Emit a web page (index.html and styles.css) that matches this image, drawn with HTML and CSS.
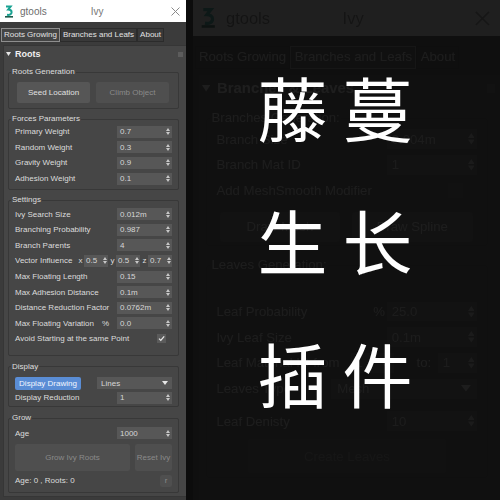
FILE: index.html
```html
<!DOCTYPE html>
<html>
<head>
<meta charset="utf-8">
<title>gtools Ivy</title>
<link rel="stylesheet" href="styles.css">
</head>
<body>
<div class="screen">
  <div class="panel">
    <div class="titlebar">
      <svg class="logo" viewBox="0 0 10 13" width="10" height="13"><path d="M2 1.6h4.6L4.2 4.6c2 0 3.4 1 3.4 2.7 0 2-1.9 3-4.6 2.5" fill="none" stroke="#1aa393" stroke-width="2"/><rect x="1" y="11" width="8" height="1.6" fill="#1d5d4d"/></svg>
      <span class="app">gtools</span>
      <span class="title">Ivy</span>
      <svg class="close" viewBox="0 0 9 9" width="9" height="9"><path d="M0.5 0.5L8.5 8.5M8.5 0.5L0.5 8.5" stroke="#8a8a8a" stroke-width="1"/></svg>
    </div>
    <div class="tabs">
      <span class="tab active">Roots Growing</span>
      <span class="tab">Branches and Leafs</span>
      <span class="tab">About</span>
    </div>
    <div class="rollout">
      <div class="rollout-head">
        <svg class="caret" viewBox="0 0 5 4" width="5" height="4"><path d="M0 0h5L2.5 4z" fill="#e6e6e6"/></svg>
        <b>Roots</b>
        <span class="grip"></span>
      </div>

      <fieldset class="group g-gen">
        <legend>Roots Generation</legend>
        <div class="btn-row">
          <div class="btn">Seed Location</div>
          <div class="btn disabled">Climb Object</div>
        </div>
      </fieldset>

      <fieldset class="group g-forces">
        <legend>Forces Parameters</legend>
        <div class="row"><span>Primary Weight</span><span class="field"><span class="v">0.7</span><svg class="spin" viewBox="0 0 4 7"><path d="M0 3L2 0L4 3zM0 4L2 7L4 4z" fill="#c8c8c8"/></svg></span></div>
        <div class="row"><span>Random Weight</span><span class="field"><span class="v">0.3</span><svg class="spin" viewBox="0 0 4 7"><path d="M0 3L2 0L4 3zM0 4L2 7L4 4z" fill="#c8c8c8"/></svg></span></div>
        <div class="row"><span>Gravity Weight</span><span class="field"><span class="v">0.9</span><svg class="spin" viewBox="0 0 4 7"><path d="M0 3L2 0L4 3zM0 4L2 7L4 4z" fill="#c8c8c8"/></svg></span></div>
        <div class="row"><span>Adhesion Weight</span><span class="field"><span class="v">0.1</span><svg class="spin" viewBox="0 0 4 7"><path d="M0 3L2 0L4 3zM0 4L2 7L4 4z" fill="#c8c8c8"/></svg></span></div>
      </fieldset>

      <fieldset class="group g-settings">
        <legend>Settings</legend>
        <div class="row"><span>Ivy Search Size</span><span class="field"><span class="v">0.012m</span><svg class="spin" viewBox="0 0 4 7"><path d="M0 3L2 0L4 3zM0 4L2 7L4 4z" fill="#c8c8c8"/></svg></span></div>
        <div class="row"><span>Branching Probability</span><span class="field"><span class="v">0.987</span><svg class="spin" viewBox="0 0 4 7"><path d="M0 3L2 0L4 3zM0 4L2 7L4 4z" fill="#c8c8c8"/></svg></span></div>
        <div class="row"><span>Branch Parents</span><span class="field"><span class="v">4</span><svg class="spin" viewBox="0 0 4 7"><path d="M0 3L2 0L4 3zM0 4L2 7L4 4z" fill="#c8c8c8"/></svg></span></div>
        <div class="row"><span>Vector Influence</span>
          <span class="vec">
            <span class="axis">x</span><span class="field small"><span class="v">0.5</span><svg class="spin" viewBox="0 0 4 7"><path d="M0 3L2 0L4 3zM0 4L2 7L4 4z" fill="#c8c8c8"/></svg></span>
            <span class="axis">y</span><span class="field small"><span class="v">0.5</span><svg class="spin" viewBox="0 0 4 7"><path d="M0 3L2 0L4 3zM0 4L2 7L4 4z" fill="#c8c8c8"/></svg></span>
            <span class="axis">z</span><span class="field small"><span class="v">0.7</span><svg class="spin" viewBox="0 0 4 7"><path d="M0 3L2 0L4 3zM0 4L2 7L4 4z" fill="#c8c8c8"/></svg></span>
          </span>
        </div>
        <div class="row"><span>Max Floating Length</span><span class="field"><span class="v">0.15</span><svg class="spin" viewBox="0 0 4 7"><path d="M0 3L2 0L4 3zM0 4L2 7L4 4z" fill="#c8c8c8"/></svg></span></div>
        <div class="row"><span>Max Adhesion Distance</span><span class="field"><span class="v">0.1m</span><svg class="spin" viewBox="0 0 4 7"><path d="M0 3L2 0L4 3zM0 4L2 7L4 4z" fill="#c8c8c8"/></svg></span></div>
        <div class="row"><span>Distance Reduction Factor</span><span class="field"><span class="v">0.0762m</span><svg class="spin" viewBox="0 0 4 7"><path d="M0 3L2 0L4 3zM0 4L2 7L4 4z" fill="#c8c8c8"/></svg></span></div>
        <div class="row"><span>Max Floating Variation</span><span class="pct">%</span><span class="field after"><span class="v">0.0</span><svg class="spin" viewBox="0 0 4 7"><path d="M0 3L2 0L4 3zM0 4L2 7L4 4z" fill="#c8c8c8"/></svg></span></div>
        <div class="row"><span>Avoid Starting at the same Point</span><span class="check on"><svg viewBox="0 0 9 9" width="9" height="9"><path d="M2 4.6L3.8 6.4L7.2 2.4" fill="none" stroke="#e8e8e8" stroke-width="1.3"/></svg></span></div>
      </fieldset>

      <fieldset class="group g-display">
        <legend>Display</legend>
        <div class="ctl-row">
          <div class="btn primary">Display Drawing</div>
          <div class="select"><span class="v">Lines</span><svg class="arrow" viewBox="0 0 6 4" width="6" height="4"><path d="M0 0h6L3 4z" fill="#e6e6e6"/></svg></div>
        </div>
        <div class="row"><span>Display Reduction</span><span class="field"><span class="v">1</span><svg class="spin" viewBox="0 0 4 7"><path d="M0 3L2 0L4 3zM0 4L2 7L4 4z" fill="#c8c8c8"/></svg></span></div>
      </fieldset>

      <fieldset class="group g-grow">
        <legend>Grow</legend>
        <div class="row"><span>Age</span><span class="field"><span class="v">1000</span><svg class="spin" viewBox="0 0 4 7"><path d="M0 3L2 0L4 3zM0 4L2 7L4 4z" fill="#c8c8c8"/></svg></span></div>
        <div class="grow-row">
          <div class="btn disabled grow-btn">Grow Ivy Roots</div>
          <div class="btn disabled reset-btn">Reset Ivy</div>
        </div>
        <div class="status-row"><span>Age: 0 , Roots: 0</span><div class="btn disabled mini">r</div></div>
      </fieldset>
    </div>
  </div>

  <div class="preview">
    <div class="panel big">
      <div class="titlebar">
        <svg class="logo" viewBox="0 0 10 13" width="10" height="13"><path d="M2 1.6h4.6L4.2 4.6c2 0 3.4 1 3.4 2.7 0 2-1.9 3-4.6 2.5" fill="none" stroke="#1aa393" stroke-width="2"/><rect x="1" y="11" width="8" height="1.6" fill="#1d5d4d"/></svg>
        <span class="app">gtools</span>
        <span class="title">Ivy</span>
        <svg class="close" viewBox="0 0 9 9" width="9" height="9"><path d="M0.5 0.5L8.5 8.5M8.5 0.5L0.5 8.5" stroke="#8a8a8a" stroke-width="1"/></svg>
      </div>
      <div class="tabs">
        <span class="tab">Roots Growing</span>
        <span class="tab active">Branches and Leafs</span>
        <span class="tab">About</span>
      </div>
      <div class="rollout">
        <div class="rollout-head">
          <svg class="caret" viewBox="0 0 5 4" width="5" height="4"><path d="M0 0h5L2.5 4z" fill="#e6e6e6"/></svg>
          <b>Branches &amp; Leaves</b>
          <span class="grip"></span>
        </div>
        <fieldset class="group b-gen">
          <legend>Branches Generation:</legend>
          <div class="row"><span>Branch Size</span><span class="field"><span class="v">0.004m</span><svg class="spin" viewBox="0 0 4 7"><path d="M0 3L2 0L4 3zM0 4L2 7L4 4z" fill="#c8c8c8"/></svg></span></div>
          <div class="row"><span>Branch Mat ID</span><span class="field"><span class="v">1</span><svg class="spin" viewBox="0 0 4 7"><path d="M0 3L2 0L4 3zM0 4L2 7L4 4z" fill="#c8c8c8"/></svg></span></div>
          <div class="row"><span>Add MeshSmooth Modifier</span><span class="check off"></span></div>
          <div class="btn-row draw-row">
            <div class="btn">Draw Mesh</div>
            <div class="btn">Draw Spline</div>
          </div>
        </fieldset>
        <fieldset class="group l-gen">
          <legend>Leaves Generation:</legend>
          <div class="row"><span>Leaf Probability</span><span class="pct tight">%</span><span class="field after"><span class="v">25.0</span><svg class="spin" viewBox="0 0 4 7"><path d="M0 3L2 0L4 3zM0 4L2 7L4 4z" fill="#c8c8c8"/></svg></span></div>
          <div class="row"><span>Ivy Leaf Size</span><span class="field"><span class="v">0.1m</span><svg class="spin" viewBox="0 0 4 7"><path d="M0 3L2 0L4 3zM0 4L2 7L4 4z" fill="#c8c8c8"/></svg></span></div>
          <div class="row"><span>Leaf Material ID from</span>
            <span class="select mini-select"><span class="v">1</span><svg class="arrow" viewBox="0 0 6 4" width="6" height="4"><path d="M0 0h6L3 4z" fill="#e6e6e6"/></svg></span>
            <span class="to">to:</span>
            <span class="field tofield"><span class="v">1</span><svg class="spin" viewBox="0 0 4 7"><path d="M0 3L2 0L4 3zM0 4L2 7L4 4z" fill="#c8c8c8"/></svg></span>
          </div>
          <div class="row"><span>Leaves Type</span><span class="select type-select"><span class="v">Mesh</span><svg class="arrow" viewBox="0 0 6 4" width="6" height="4"><path d="M0 0h6L3 4z" fill="#e6e6e6"/></svg></span></div>
          <div class="row density"><span>Leaf Denisty</span><span class="field"><span class="v">10</span><svg class="spin" viewBox="0 0 4 7"><path d="M0 3L2 0L4 3zM0 4L2 7L4 4z" fill="#c8c8c8"/></svg></span></div>
          <div class="create-row"><div class="btn disabled create">Create Leaves</div></div>
        </fieldset>
      </div>
    </div>
    <div class="shade"></div>
    <div class="caption">
      <span class="line">藤蔓</span>
      <span class="line">生长</span>
      <span class="line">插件</span>
    </div>
  </div>
</div>
</body>
</html>
```

FILE: styles.css
```css
* { box-sizing: border-box; }
html, body { margin: 0; padding: 0; }
body {
  width: 500px;
  height: 500px;
  overflow: hidden;
  background: #0e0e0e;
  font-family: "Liberation Sans", Arial, sans-serif;
  font-size: 8px;
  color: #dcdcdc;
}
.screen { display: flex; width: 500px; height: 500px; }

.panel {
  width: 186px;
  height: 500px;
  flex: none;
  background: #3b3b3b;
  display: flex;
  flex-direction: column;
}

/* title bar */
.titlebar {
  height: 22px;
  flex: none;
  background: #ffffff;
  display: flex;
  align-items: center;
  padding-left: 4px;
}
.logo { display: block; flex: none; }
.app { margin-left: 6px; font-size: 10px; color: #6d6d6d; }
.title { margin-left: 44px; font-size: 10px; color: #777; }
.close { margin-left: auto; margin-right: 6px; display: block; }

/* tabs */
.tabs {
  height: 20px;
  flex: none;
  display: flex;
  padding: 6px 0 0 1px;
}
.tab {
  height: 14px;
  line-height: 12px;
  padding: 0 2px;
  border: 1px solid #2b2b2b;
  background: #393939;
  color: #e2e2e2;
  white-space: nowrap;
}
.tab.active { border-color: #8e8e8e; background: #444; }

/* rollout */
.rollout {
  flex: 1;
  margin: 3px 0 3px 3px;
  background: #464646;
  border: 1px solid #363636;
  border-right: none;
}
.rollout-head {
  height: 16px;
  display: flex;
  align-items: center;
  padding-left: 2px;
  color: #f0f0f0;
}
.rollout-head b { font-size: 9px; margin-left: 4px; }
.caret { display: block; }
.grip {
  margin-left: auto;
  margin-right: 3px;
  width: 5px;
  height: 5px;
  background: #5c5c5c;
}

/* group boxes */
.group {
  margin: 5px 7px 0 4px;
  border: 1px solid #383838;
  border-radius: 2px;
  padding: 0 6px 3px;
  min-width: 0;
}
.group legend {
  margin-left: -4px;
  padding: 0 1px;
  height: 10px;
  line-height: 10px;
  font-size: 8px;
  color: #dedede;
}
.g-gen { padding-top: 5px; padding-bottom: 5px; }
.g-forces { padding-top: 0; padding-bottom: 3px; }
.g-settings { padding-top: 1px; padding-bottom: 8px; }
.g-display { padding-top: 5px; padding-bottom: 1px; margin-top: 6px; }
.g-grow { padding-top: 2px; padding-bottom: 4px; margin-top: 6px; }

.row {
  display: flex;
  align-items: center;
  height: 15.6px;
  white-space: nowrap;
}

/* spinner field */
.field {
  margin-left: auto;
  width: 55px;
  height: 12px;
  flex: none;
  background: #575757;
  display: flex;
  align-items: center;
  padding: 0 2px 0 3px;
  color: #d6d6d6;
}
.field .v { flex: 1; }
.spin { width: 4px; height: 7px; display: block; flex: none; }
.field.after { margin-left: 0; }
.pct { margin-left: auto; margin-right: 8px; }
.pct.tight { margin-right: 1px; }

.vec { margin-left: auto; display: flex; align-items: center; }
.axis { width: 5px; margin-left: 2px; text-align: center; }
.field.small { width: 24px; margin-left: 1px; padding: 0 1px 0 2px; }

.check {
  width: 9px;
  height: 9px;
  margin-left: auto;
  margin-right: 6px;
  background: #5a5a5a;
  display: block;
}
.check svg { display: block; }
.check.off { margin-right: 9px; background: #555; }

/* buttons */
.btn-row { display: flex; justify-content: space-between; padding: 0 3px 0 2px; }
.btn {
  height: 21px;
  width: 73px;
  background: #565656;
  border-radius: 2px;
  color: #e0e0e0;
  display: flex;
  align-items: center;
  justify-content: center;
  white-space: nowrap;
}
.btn.disabled { background: #4f4f4f; color: #8a8a8a; }
.btn.primary {
  width: 66px;
  height: 13px;
  background: #5a8dd5;
  color: #f2f6ff;
}

.ctl-row { display: flex; justify-content: space-between; align-items: center; }
.select {
  width: 75px;
  height: 12px;
  background: #575757;
  display: flex;
  align-items: center;
  padding: 0 4px;
  color: #d6d6d6;
}
.select .v { flex: 1; }
.arrow { display: block; }

.grow-row { display: flex; justify-content: space-between; margin-top: 3px; }
.grow-btn { width: 115px; height: 27px; }
.reset-btn { width: 37px; height: 27px; }
.status-row {
  display: flex;
  align-items: center;
  justify-content: space-between;
  height: 14px;
  margin-top: 3px;
}
.btn.mini { width: 12px; height: 12px; }

/* branches tab (preview) */
.b-gen { padding-top: 0; padding-bottom: 2px; }
.draw-row { margin-top: 5px; }
.draw-row .btn { height: 18px; }
.l-gen { margin-top: 7px; padding-top: 15px; padding-bottom: 2px; }
.mini-select { margin-left: auto; width: 26px; padding: 0 2px 0 3px; }
.to { margin-left: 14px; margin-right: 4px; }
.field.tofield { margin-left: 0; width: 24px; }
.type-select { margin-left: auto; width: 89px; }
.density { margin-top: 4px; }
.create-row { display: flex; justify-content: center; margin-top: 3px; }
.create { width: 120px; height: 21px; }

/* preview on the right */
.preview {
  flex: 1;
  position: relative;
  overflow: hidden;
  background: #101010;
  padding-left: 7px;
}
.panel.big { zoom: 1.65; filter: blur(0.35px); }
.shade {
  position: absolute;
  inset: 0;
  background: rgba(12, 12, 12, 0.92);
}
.caption {
  position: absolute;
  left: 0;
  top: 40px;
  width: 313px;
  display: flex;
  flex-direction: column;
  align-items: center;
  font-family: "Noto Sans CJK SC", "Noto Sans CJK JP", sans-serif;
  font-size: 70px;
  line-height: 133px;
  letter-spacing: 15px;
  color: #ffffff;
}
.line { display: block; white-space: nowrap; }
```
